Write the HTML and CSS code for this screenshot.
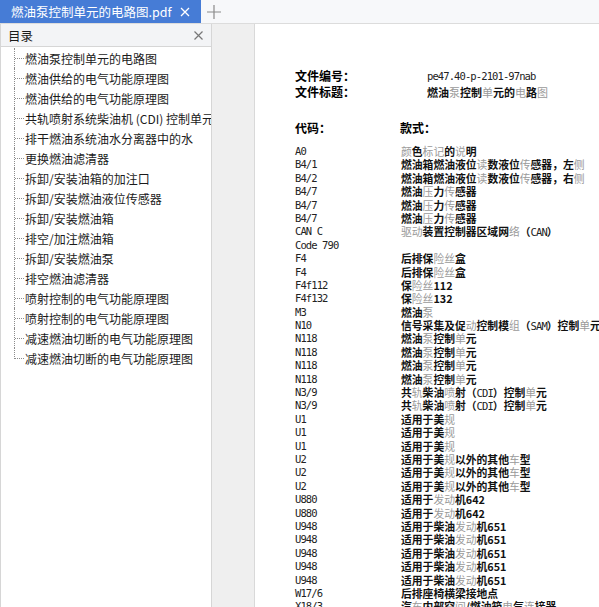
FILE: index.html
```html
<!DOCTYPE html>
<html lang="zh-CN">
<head>
    <meta charset="UTF-8">
    <meta name="viewport" content="width=device-width, initial-scale=1.0">
    <title>燃油泵控制单元的电路图.pdf</title>
    <link rel="stylesheet" href="styles.css">
</head>
<body>
    <div class="tabbar">
        <div class="tab">
            <span class="tab-title">燃油泵控制单元的电路图.pdf</span>
            <svg class="tab-close" width="10" height="10" viewBox="0 0 10 10"><path d="M1 1L9 9M9 1L1 9" stroke="#fff" stroke-width="1.3"/></svg>
        </div>
        <div class="tab-add">
            <svg width="14" height="14" viewBox="0 0 14 14"><path d="M7 0V14M0 7H14" stroke="#8a8a8a" stroke-width="1.2"/></svg>
        </div>
    </div>

    <div class="main">
        <div class="outline">
            <div class="outline-head">
                <span>目录</span>
                <svg width="9" height="9" viewBox="0 0 9 9"><path d="M0.5 0.5L8.5 8.5M8.5 0.5L0.5 8.5" stroke="#777" stroke-width="1.2"/></svg>
            </div>
            <ul class="tree">
                <li><span class="twig"></span>燃油泵控制单元的电路图</li>
                <li><span class="twig"></span>燃油供给的电气功能原理图</li>
                <li><span class="twig"></span>燃油供给的电气功能原理图</li>
                <li><span class="twig"></span>共轨喷射系统柴油机 (CDI) 控制单元</li>
                <li><span class="twig"></span>排干燃油系统油水分离器中的水</li>
                <li><span class="twig"></span>更换燃油滤清器</li>
                <li><span class="twig"></span>拆卸/安装油箱的加注口</li>
                <li><span class="twig"></span>拆卸/安装燃油液位传感器</li>
                <li><span class="twig"></span>拆卸/安装燃油箱</li>
                <li><span class="twig"></span>排空/加注燃油箱</li>
                <li><span class="twig"></span>拆卸/安装燃油泵</li>
                <li><span class="twig"></span>排空燃油滤清器</li>
                <li><span class="twig"></span>喷射控制的电气功能原理图</li>
                <li><span class="twig"></span>喷射控制的电气功能原理图</li>
                <li><span class="twig"></span>减速燃油切断的电气功能原理图</li>
                <li><span class="twig"></span>减速燃油切断的电气功能原理图</li>
            </ul>
        </div>

        <div class="gutter"></div>

        <div class="page">
            <div class="doc-head">
                <b>文件编号：</b><span class="code">pe47.40-p-2101-97nab</span>
                <b>文件标题：</b><span class="desc">燃油<i class="g">泵</i>控制<i class="g">单</i>元的<i class="g">电</i>路<i class="g">图</i></span>
            </div>

            <div class="doc-cols">
                <b>代码：</b><b>款式：</b>
            </div>

            <div class="legend">
                <span class="code">A0</span><span class="desc"><i class="g">颜</i>色<i class="g">标记</i>的<i class="g">说</i>明</span>
                <span class="code">B4/1</span><span class="desc">燃油箱燃油液位<i class="g">读</i>数液位<i class="g">传</i>感器，左<i class="g">侧</i></span>
                <span class="code">B4/2</span><span class="desc">燃油箱燃油液位<i class="g">读</i>数液位<i class="g">传</i>感器，右<i class="g">侧</i></span>
                <span class="code">B4/7</span><span class="desc">燃油<i class="g">压</i>力<i class="g">传</i>感器</span>
                <span class="code">B4/7</span><span class="desc">燃油<i class="g">压</i>力<i class="g">传</i>感器</span>
                <span class="code">B4/7</span><span class="desc">燃油<i class="g">压</i>力<i class="g">传</i>感器</span>
                <span class="code">CAN C</span><span class="desc"><i class="g">驱动</i>装置控制器区域网<i class="g">络</i>（<span class="code">CAN</span>）</span>
                <span class="code">Code 790</span><span class="desc"></span>
                <span class="code">F4</span><span class="desc">后排保<i class="g">险丝</i>盒</span>
                <span class="code">F4</span><span class="desc">后排保<i class="g">险丝</i>盒</span>
                <span class="code">F4f112</span><span class="desc">保<i class="g">险丝</i>112</span>
                <span class="code">F4f132</span><span class="desc">保<i class="g">险丝</i>132</span>
                <span class="code">M3</span><span class="desc">燃油<i class="g">泵</i></span>
                <span class="code">N10</span><span class="desc">信号采集及促<i class="g">动</i>控制模<i class="g">组</i>（<span class="code">SAM</span>）控制<i class="g">单</i>元</span>
                <span class="code">N118</span><span class="desc">燃油<i class="g">泵</i>控制<i class="g">单</i>元</span>
                <span class="code">N118</span><span class="desc">燃油<i class="g">泵</i>控制<i class="g">单</i>元</span>
                <span class="code">N118</span><span class="desc">燃油<i class="g">泵</i>控制<i class="g">单</i>元</span>
                <span class="code">N118</span><span class="desc">燃油<i class="g">泵</i>控制<i class="g">单</i>元</span>
                <span class="code">N3/9</span><span class="desc">共<i class="g">轨</i>柴油<i class="g">喷</i>射（<span class="code">CDI</span>）控制<i class="g">单</i>元</span>
                <span class="code">N3/9</span><span class="desc">共<i class="g">轨</i>柴油<i class="g">喷</i>射（<span class="code">CDI</span>）控制<i class="g">单</i>元</span>
                <span class="code">U1</span><span class="desc">适用于美<i class="g">规</i></span>
                <span class="code">U1</span><span class="desc">适用于美<i class="g">规</i></span>
                <span class="code">U1</span><span class="desc">适用于美<i class="g">规</i></span>
                <span class="code">U2</span><span class="desc">适用于美<i class="g">规</i>以外的其他<i class="g">车</i>型</span>
                <span class="code">U2</span><span class="desc">适用于美<i class="g">规</i>以外的其他<i class="g">车</i>型</span>
                <span class="code">U2</span><span class="desc">适用于美<i class="g">规</i>以外的其他<i class="g">车</i>型</span>
                <span class="code">U880</span><span class="desc">适用于<i class="g">发动</i>机642</span>
                <span class="code">U880</span><span class="desc">适用于<i class="g">发动</i>机642</span>
                <span class="code">U948</span><span class="desc">适用于柴油<i class="g">发动</i>机651</span>
                <span class="code">U948</span><span class="desc">适用于柴油<i class="g">发动</i>机651</span>
                <span class="code">U948</span><span class="desc">适用于柴油<i class="g">发动</i>机651</span>
                <span class="code">U948</span><span class="desc">适用于柴油<i class="g">发动</i>机651</span>
                <span class="code">U948</span><span class="desc">适用于柴油<i class="g">发动</i>机651</span>
                <span class="code">W17/6</span><span class="desc">后排座椅横梁接地点</span>
                <span class="code">X18/3</span><span class="desc">汽<i class="g">车</i>内部空<i class="g">间</i>/燃油箱<i class="g">电</i>气<i class="g">连</i>接器</span>
            </div>
        </div>
    </div>
</body>
</html>
```

FILE: styles.css
```css
html, body {
    margin: 0;
    height: 100%;
    overflow: hidden;
}

body {
    font-family: "Noto Sans CJK SC", "Noto Sans", sans-serif;
    font-size: 12px;
    color: #1b1b1b;
    background: #efefef;
    display: flex;
    flex-direction: column;
}

/* tab strip */
.tabbar {
    height: 23px;
    display: flex;
    align-items: stretch;
    background: #f7f8fa;
    border-bottom: 1px solid #dcdcdc;
}

.tab {
    width: 201px;
    background: #467cd6;
    color: #fff;
    display: flex;
    align-items: center;
    justify-content: space-between;
    padding: 0 8px 0 11px;
    box-sizing: border-box;
    font-size: 12.5px;
}

.tab-close {
    margin-right: 3px;
}

.tab-add {
    width: 26px;
    display: flex;
    align-items: center;
    justify-content: center;
}

.main {
    flex: 1;
    display: grid;
    grid-template-columns: 212px 42px 1fr;
    min-height: 0;
}

/* outline panel */
.outline {
    background: #fff;
    border-left: 1px solid #d6d6d6;
    border-right: 1px solid #d6d6d6;
    overflow: hidden;
}

.outline-head {
    height: 22px;
    display: flex;
    align-items: center;
    justify-content: space-between;
    padding: 0 8px 0 7px;
    background: #f3f4f6;
    border-bottom: 1px solid #d6d6d6;
    font-size: 12.5px;
}

.tree {
    list-style: none;
    margin: 0;
    padding: 1px 0 0 0;
}

.tree li {
    height: 20px;
    margin-left: 13px;
    border-left: 1px dotted #8c8c8c;
    display: flex;
    align-items: center;
    white-space: nowrap;
}

.tree .twig {
    flex: none;
    width: 9px;
    height: 10px;
    margin-right: 1px;
    align-self: flex-start;
    border-bottom: 1px dotted #8c8c8c;
}

.tree li:last-child {
    border-left-color: transparent;
}

.tree li:last-child .twig {
    margin-left: -1px;
    border-left: 1px dotted #8c8c8c;
}

.gutter {
    background: #efefef;
}

/* document page */
.page {
    background: #fff;
    border-left: 1px solid #d9d9d9;
    padding: 44px 0 0 40px;
    overflow: hidden;
    white-space: nowrap;
}

.page b {
    font-weight: bold;
    color: #000;
}

.code {
    font-family: "DejaVu Sans Mono", monospace;
    font-size: 10.5px;
    letter-spacing: -0.9px;
    color: #222;
}

.desc {
    font-weight: bold;
    font-size: 10.8px;
    color: #111;
}

.desc .code {
    font-weight: normal;
}

.g {
    font-style: normal;
    font-weight: normal;
    color: #9a9a9a;
}

.doc-head {
    display: grid;
    grid-template-columns: 132px auto;
    line-height: 16px;
}

.doc-head .desc {
    font-size: 11px;
}

.doc-cols {
    display: grid;
    grid-template-columns: 105px auto;
    margin-top: 20px;
    line-height: 16px;
}

.legend {
    display: grid;
    grid-template-columns: 106px auto;
    grid-auto-rows: 13.4px;
    margin-top: 9px;
    line-height: 13.4px;
}
```
